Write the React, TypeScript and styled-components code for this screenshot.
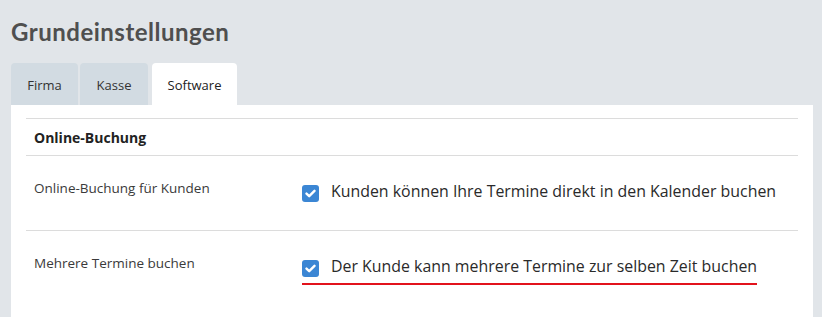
import React from "react";
import styled, { createGlobalStyle } from "styled-components";

const Global = createGlobalStyle`
  html, body { margin: 0; padding: 0; background: #e1e5e9; overflow: hidden; }
  body { font-family: "Open Sans", sans-serif; color: #333; }
`;

const Page = styled.div`
  padding: 0 9px 0 11px;
`;

const Title = styled.h1`
  margin: 0;
  padding-top: 17px;
  height: 63px;
  box-sizing: border-box;
  font-family: "Lato", sans-serif;
  font-weight: 700;
  font-size: 24px;
  letter-spacing: 0.5px;
  line-height: 29px;
  color: #4f4f4f;
`;

const Tabs = styled.div`
  display: flex;
  gap: 2px;
  height: 42px;
`;

const Tab = styled.div<{ $active?: boolean; $w: number }>`
  display: flex;
  align-items: center;
  justify-content: center;
  width: ${(p) => p.$w}px;
  padding-top: 1px;
  box-sizing: border-box;
  border-radius: 4px 4px 0 0;
  background: ${(p) => (p.$active ? "#fff" : "#d2dbe2")};
  color: ${(p) => (p.$active ? "#222" : "#333")};
  font-size: 13px;
  ${(p) => (p.$active ? "margin-left: 2px;" : "")}
`;

const Panel = styled.div`
  background: #fff;
  padding: 13px 15px 11px;
`;

const SectionHead = styled.div`
  border-top: 1px solid #dcdcdc;
  border-bottom: 1px solid #dcdcdc;
  height: 36px;
  display: flex;
  align-items: center;
  padding-left: 8px;
  font-weight: 700;
  font-size: 14px;
  color: #222;
`;

const Row = styled.div<{ $last?: boolean }>`
  display: grid;
  grid-template-columns: 268px 1fr;
  align-items: start;
  padding: 0 0 0 8px;
  height: 75px;
  box-sizing: border-box;
  border-bottom: ${(p) => (p.$last ? "none" : "1px solid #dcdcdc")};
`;

const Label = styled.div`
  margin-top: 22px;
  font-size: 13.5px;
  line-height: 20px;
  color: #3a3a3a;
`;

const CheckLine = styled.div<{ $error?: boolean }>`
  margin-top: 24px;
  display: inline-flex;
  align-items: flex-start;
  gap: 12px;
  justify-self: start;
  padding-bottom: 6px;
  border-bottom: ${(p) => (p.$error ? "2px solid #e2131c" : "2px solid transparent")};
`;

const Box = styled.span`
  margin-top: 5px;
  width: 17px;
  height: 17px;
  border-radius: 3px;
  background: #3b86d4;
  display: inline-flex;
  align-items: center;
  justify-content: center;
  flex: none;
`;

const CheckText = styled.span`
  font-size: 15.9px;
  line-height: 22px;
  color: #2a2a2a;
`;

const Check = () => (
  <Box>
    <svg width="11" height="9" viewBox="0 0 11 9">
      <path d="M1.5 4.6 L4.2 7.2 L9.5 1.8" fill="none" stroke="#fff" strokeWidth="2.4" strokeLinecap="round" strokeLinejoin="round" />
    </svg>
  </Box>
);

export default function App() {
  return (
    <Page>
      <Global />
      <Title>Grundeinstellungen</Title>
      <Tabs>
        <Tab $w={67}>Firma</Tab>
        <Tab $w={68}>Kasse</Tab>
        <Tab $w={85} $active>Software</Tab>
      </Tabs>
      <Panel>
        <SectionHead>Online-Buchung</SectionHead>
        <Row>
          <Label>Online-Buchung für Kunden</Label>
          <CheckLine>
            <Check />
            <CheckText>Kunden können Ihre Termine direkt in den Kalender buchen</CheckText>
          </CheckLine>
        </Row>
        <Row $last>
          <Label>Mehrere Termine buchen</Label>
          <CheckLine $error>
            <Check />
            <CheckText>Der Kunde kann mehrere Termine zur selben Zeit buchen</CheckText>
          </CheckLine>
        </Row>
      </Panel>
    </Page>
  );
}
